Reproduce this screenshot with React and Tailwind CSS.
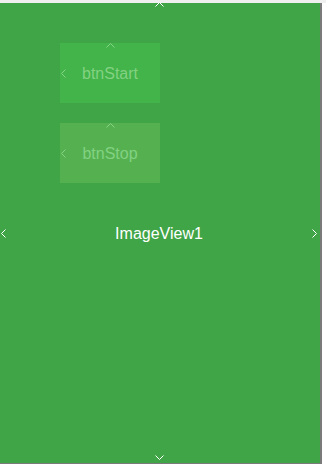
import React from "react";

function Chevron({ dir, className }) {
  // small 1px chevron arrows used by the designer handles
  const pts = {
    up: "0.5,4.5 4.5,0.5 8.5,4.5",
    down: "0.5,0.5 4.5,4.5 8.5,0.5",
    left: "4.5,0.5 0.5,4.5 4.5,8.5",
    right: "0.5,0.5 4.5,4.5 0.5,8.5",
  }[dir];
  const vertical = dir === "up" || dir === "down";
  return (
    <svg
      width={vertical ? 9 : 5}
      height={vertical ? 5 : 9}
      className={className}
      fill="none"
      stroke="currentColor"
      strokeWidth="1"
    >
      <polyline points={pts} />
    </svg>
  );
}

function DesignerButton({ label, bg }) {
  return (
    <div className={`w-[100px] h-[60px] ${bg} grid grid-cols-[6px_1fr_6px] grid-rows-[5px_1fr_5px] text-[#86d486]`}>
      <div className="col-span-3 flex justify-center">
        <Chevron dir="up" />
      </div>
      <div className="flex items-center pl-[1px]">
        <Chevron dir="left" />
      </div>
      <div className="flex items-center justify-center pt-[1px]">
        <span className="text-[16px] text-[#82d282] leading-none">{label}</span>
      </div>
    </div>
  );
}

export default function App() {
  return (
    <div
      className="w-[326px] h-[470px] bg-white overflow-hidden"
      style={{ fontFamily: '"Liberation Sans", Arial, sans-serif' }}
    >
      <div className="h-[3px] bg-[#f0f0f0]" />
      <div className="w-[322px] h-[461px] bg-[#3fa547] border-r-2 border-b border-[#7a7a7a] grid">
        {/* the image view fills the canvas, with its resize handles */}
        <div className="col-start-1 row-start-1 grid grid-rows-[auto_1fr_auto] text-white">
          <div className="flex justify-center -mt-[1px] pr-[2px]">
            <Chevron dir="up" />
          </div>
          <div className="flex items-center justify-between px-[1px] pr-[3px] pt-[4px]">
            <Chevron dir="left" />
            <span className="text-[16px] leading-none pt-[1px]">ImageView1</span>
            <Chevron dir="right" />
          </div>
          <div className="flex justify-center pb-[3px] pr-[2px]">
            <Chevron dir="down" />
          </div>
        </div>

        {/* buttons dropped on top of it */}
        <div className="col-start-1 row-start-1 self-start flex flex-col gap-[20px] pl-[60px] pt-[40px]">
          <DesignerButton label="btnStart" bg="bg-[#42b449]" />
          <DesignerButton label="btnStop" bg="bg-[#55b150]" />
        </div>
      </div>
    </div>
  );
}
